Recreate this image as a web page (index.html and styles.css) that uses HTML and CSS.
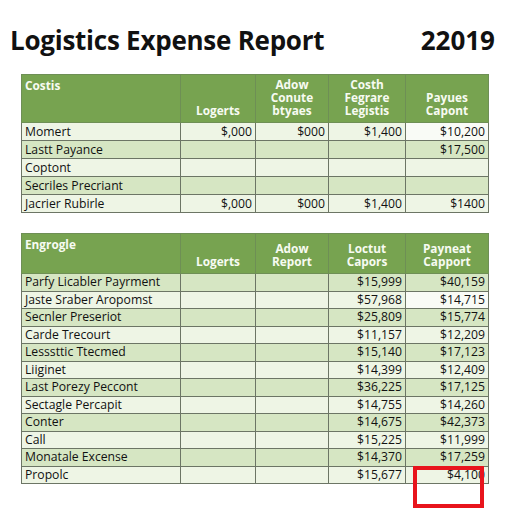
FILE: index.html
```html
<!DOCTYPE html>
<html>
<head>
<meta charset="utf-8">
<link rel="stylesheet" href="styles.css">
</head>
<body>
<div class="page">
  <header class="title-bar">
    <h1 class="title">Logistics Expense Report</h1>
    <div class="year">22019</div>
  </header>

  <table class="report report-a">
    <colgroup>
      <col class="c1"><col class="c2"><col class="c3"><col class="c4"><col class="c5">
    </colgroup>
    <thead>
      <tr>
        <th class="first">Costis</th>
        <th>Logerts</th>
        <th>Adow<br>Conute<br>btyaes</th>
        <th>Costh<br>Fegrare<br>Legistis</th>
        <th>Payues<br>Capont</th>
      </tr>
    </thead>
    <tbody>
      <tr class="light"><td>Momert</td><td class="num">$,000</td><td class="num">$000</td><td class="num">$1,400</td><td class="num white">$10,200</td></tr>
      <tr class="dark"><td>Lastt Payance</td><td></td><td></td><td></td><td class="num">$17,500</td></tr>
      <tr class="light"><td>Coptont</td><td></td><td></td><td></td><td></td></tr>
      <tr class="dark"><td>Secriles Precriant</td><td></td><td></td><td></td><td></td></tr>
      <tr class="light"><td>Jacrier Rubirle</td><td class="num">$,000</td><td class="num">$000</td><td class="num">$1,400</td><td class="num">$1400</td></tr>
    </tbody>
  </table>

  <table class="report report-b">
    <colgroup>
      <col class="c1"><col class="c2"><col class="c3"><col class="c4"><col class="c5">
    </colgroup>
    <thead>
      <tr>
        <th class="first">Engrogle</th>
        <th>Logerts</th>
        <th>Adow<br>Report</th>
        <th>Loctut<br>Capors</th>
        <th>Payneat<br>Capport</th>
      </tr>
    </thead>
    <tbody>
      <tr class="dark"><td>Parfy Licabler Payrment</td><td></td><td></td><td class="num">$15,999</td><td class="num">$40,159</td></tr>
      <tr class="light"><td>Jaste Sraber Aropomst</td><td></td><td></td><td class="num">$57,968</td><td class="num white">$14,715</td></tr>
      <tr class="dark"><td>Secnler Preseriot</td><td></td><td></td><td class="num">$25,809</td><td class="num">$15,774</td></tr>
      <tr class="light"><td>Carde Trecourt</td><td></td><td></td><td class="num">$11,157</td><td class="num">$12,209</td></tr>
      <tr class="dark"><td>Lesssttic Ttecmed</td><td></td><td></td><td class="num">$15,140</td><td class="num">$17,123</td></tr>
      <tr class="light"><td>Liiginet</td><td></td><td></td><td class="num">$14,399</td><td class="num">$12,409</td></tr>
      <tr class="dark"><td>Last Porezy Peccont</td><td></td><td></td><td class="num">$36,225</td><td class="num">$17,125</td></tr>
      <tr class="light"><td>Sectagle Percapit</td><td></td><td></td><td class="num">$14,755</td><td class="num">$14,260</td></tr>
      <tr class="dark"><td>Conter</td><td></td><td></td><td class="num">$14,675</td><td class="num">$42,373</td></tr>
      <tr class="light"><td>Call</td><td></td><td></td><td class="num">$15,225</td><td class="num">$11,999</td></tr>
      <tr class="dark"><td>Monatale Excense</td><td></td><td></td><td class="num">$14,370</td><td class="num">$17,259</td></tr>
      <tr class="light"><td>Propolc</td><td></td><td></td><td class="num">$15,677</td><td class="num">$4,100</td></tr>
    </tbody>
  </table>

  <div class="highlight"></div>
</div>
</body>
</html>
```

FILE: styles.css
```css
html, body {
  margin: 0;
  padding: 0;
  background: #ffffff;
}

.page {
  position: relative;
  width: 512px;
  height: 512px;
  font-family: "Open Sans", "Noto Sans", sans-serif;
  color: #111;
}

.title-bar {
  display: flex;
  justify-content: space-between;
  align-items: baseline;
  padding: 25px 17px 0 10px;
  height: 52px;
  box-sizing: border-box;
}

.title {
  margin: 0;
  font-size: 26px;
  font-weight: 700;
  line-height: 30px;
  letter-spacing: -0.25px;
}

.year {
  font-size: 26px;
  font-weight: 700;
  line-height: 30px;
}

.report {
  margin-left: 21px;
  width: 467px;
  table-layout: fixed;
  border-collapse: collapse;
  font-size: 12.2px;
}

.report-a { margin-top: 22px; }
.report-b { margin-top: 20px; }

.c1 { width: 159px; }
.c2 { width: 75px; }
.c3 { width: 73px; }
.c4 { width: 77px; }
.c5 { width: 83px; }

.report th {
  background: #77a350;
  color: #f7fbf2;
  font-weight: 700;
  font-size: 11.8px;
  line-height: 13px;
  text-align: center;
  vertical-align: bottom;
  padding: 0 2px 5px;
  border: 1px solid #6e8f55;
}

.report th.first {
  text-align: left;
  vertical-align: top;
  padding: 4px 3px 0;
}

.report-a thead tr { height: 48px; }
.report-b thead tr { height: 40px; }

.report td {
  border: 1px solid #6c7565;
  padding: 0 3px;
  line-height: 16px;
  white-space: nowrap;
  overflow: hidden;
}

.report-a tbody tr { height: 18px; }
.report-b tbody tr { height: 17.5px; }

.light td { background: #eef5e5; }
.dark td { background: #d6e6c3; }
.report td.white { background: #f9fbf6; }

.num {
  text-align: right;
}

.highlight {
  position: absolute;
  left: 413px;
  top: 466px;
  width: 71px;
  height: 42px;
  border: 4px solid #e8141c;
  box-sizing: border-box;
}
```
